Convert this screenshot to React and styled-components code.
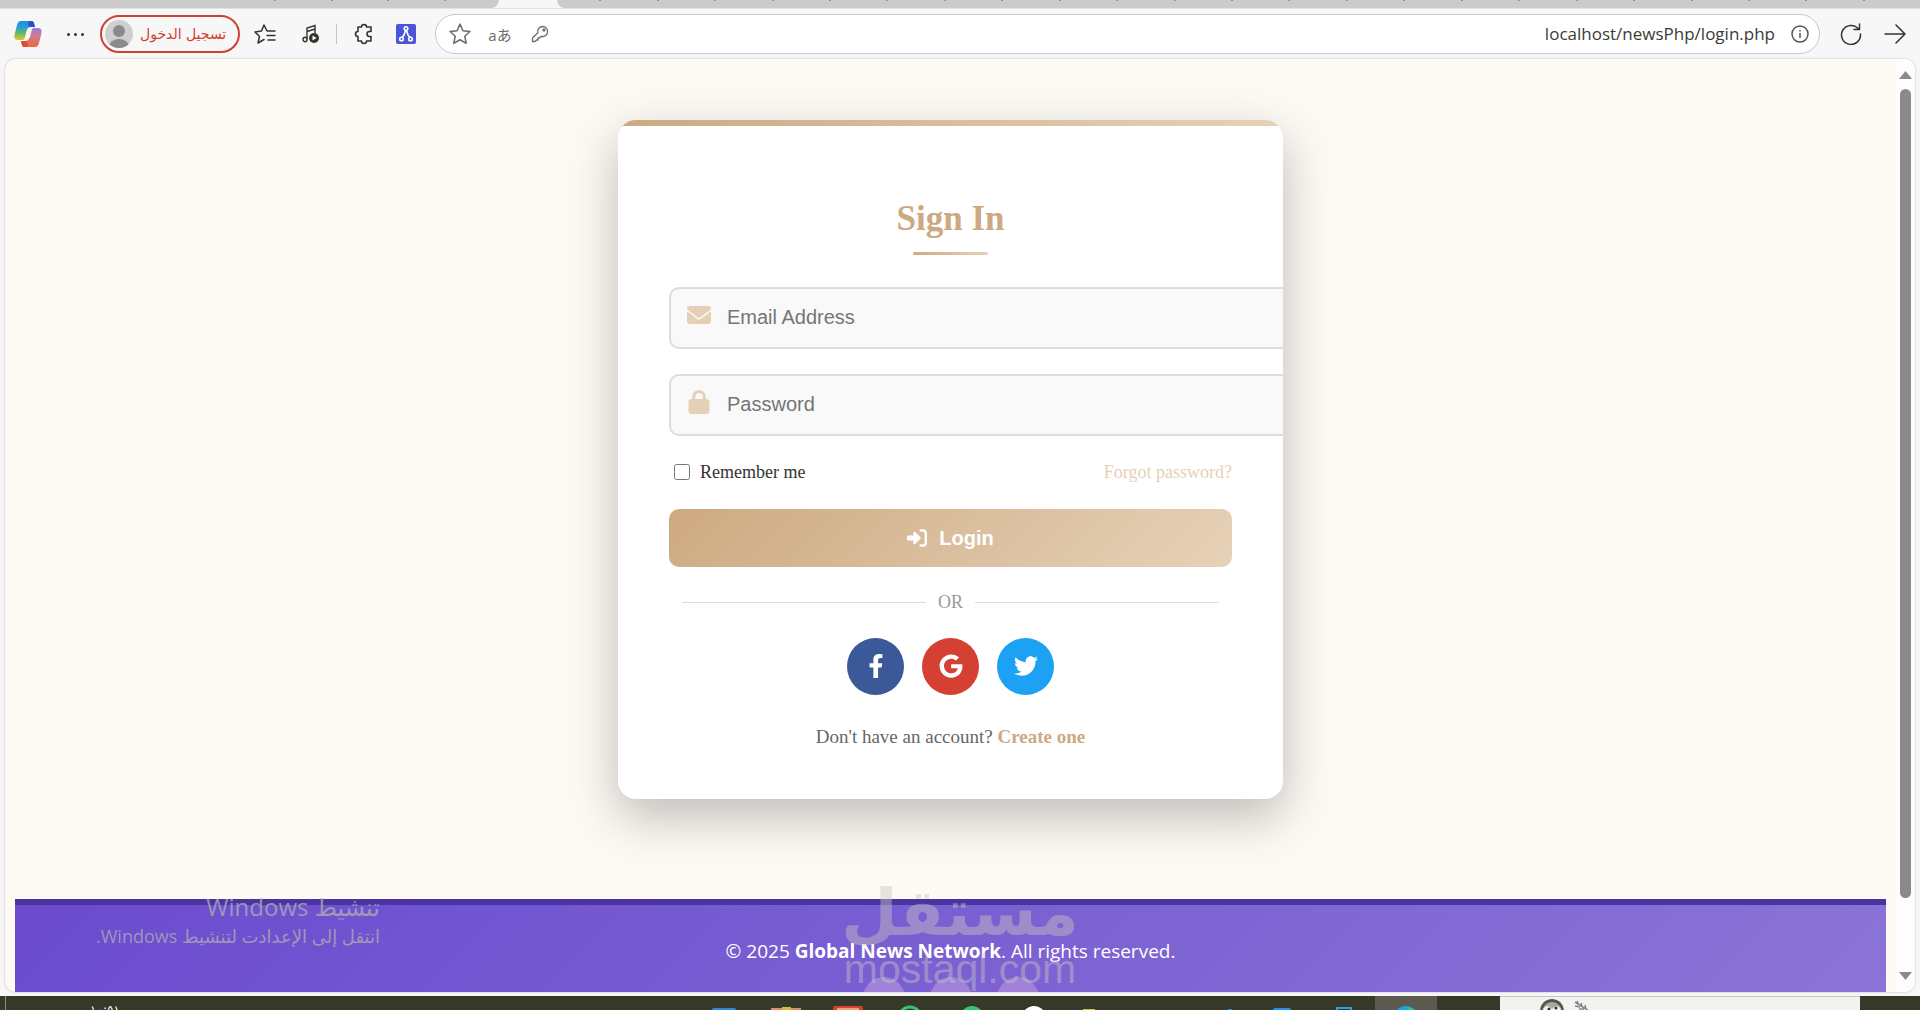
import React from "react";
import styled, { createGlobalStyle, css } from "styled-components";
import { FaFacebookF, FaGoogle, FaTwitter } from "react-icons/fa";
import { FaEnvelope, FaLock, FaRightToBracket } from "react-icons/fa6";

const TAB_TICKS_LEFT = 4;
const TAB_TICKS_RIGHT = 23;

const SOCIALS = [
  { name: "Facebook", color: "#3b5998", Icon: FaFacebookF },
  { name: "Google", color: "#d44132", Icon: FaGoogle },
  { name: "Twitter", color: "#1da1f2", Icon: FaTwitter },
];

const TASKS = [
  { name: "Mail", art: <rect x="19" y="12" width="24" height="8" rx="2" fill="#2f86d0" /> },
  {
    name: "Files",
    art: (
      <>
        <rect x="16" y="12" width="30" height="8" fill="#e08a70" />
        <rect x="27" y="11" width="9" height="8" fill="#d9b544" />
      </>
    ),
  },
  {
    name: "Presentation",
    art: (
      <>
        <rect x="16" y="10" width="30" height="8" rx="2" fill="#d8402f" />
        <rect x="20" y="12" width="22" height="4" fill="#e5a868" />
      </>
    ),
  },
  { name: "Messages", art: <circle cx="31" cy="22" r="11" fill="none" stroke="#35c46c" strokeWidth="3" /> },
  { name: "Music", art: <circle cx="31" cy="22" r="12" fill="#35c46c" /> },
  { name: "Chat", art: <circle cx="31" cy="22" r="12" fill="#ffffff" /> },
  { name: "Folder", art: <rect x="18" y="13" width="12" height="4" fill="#e0b83c" /> },
  { name: "Notes", art: null },
  { name: "Editor", art: <rect x="39" y="13" width="4" height="3" fill="#1f8fe8" /> },
  { name: "Store", art: <rect x="22" y="12" width="18" height="6" rx="2" fill="#1f8fe8" /> },
  {
    name: "Phone",
    art: <rect x="24" y="12" width="14" height="10" fill="none" stroke="#1da1f2" strokeWidth="2" />,
  },
  {
    name: "Browser",
    active: true,
    art: (
      <>
        <circle cx="31" cy="22" r="12" fill="#1da1f2" />
        <path d="M32 11 Q40 12 42 18 L34 18Z" fill="#35c46c" />
      </>
    ),
  },
];

const CopilotIcon = () => (
  <svg width="28" height="28" viewBox="0 0 28 28" aria-hidden="true">
    <defs>
      <linearGradient id="copilotLeft" x1="0" y1="0" x2="0" y2="1">
        <stop offset="0" stopColor="#1a8df0" />
        <stop offset="0.35" stopColor="#2a9fd8" />
        <stop offset="0.6" stopColor="#55b86a" />
        <stop offset="1" stopColor="#e8c23a" />
      </linearGradient>
      <linearGradient id="copilotRight" x1="0" y1="0" x2="0" y2="1">
        <stop offset="0" stopColor="#9a78e0" />
        <stop offset="0.45" stopColor="#d77a86" />
        <stop offset="1" stopColor="#e66a3c" />
      </linearGradient>
    </defs>
    <path d="M7 1h10c3 0 3 2 4 6h-4c-3 0-4 2-5 6l-1 4c-1 3-1 3-4 3H4c-4 0-4-3-3-7l2-8c1-3 2-4 4-4Z" fill="url(#copilotLeft)" />
    <path d="M15 1h2c3 0 3 2 4 6h-5c-2 0-2-4-1-6Z" fill="#2a50c0" />
    <path d="M21 27H11c-3 0-3-2-4-6h4c3 0 4-2 5-6l1-4c1-3 2-3 4-3h3c4 0 4 3 3 7l-2 8c-1 3-2 4-4 4Z" fill="url(#copilotRight)" />
    <path d="M13 27h-2c-3 0-3-2-4-6h5c2 0 2 4 1 6Z" fill="#e04a30" />
    <path d="M16 9h2l-2 8c-1 2-2 3-4 3h-1c1-1 1-2 2-5 0-3 1-6 3-6Z" fill="#fbf6f2" />
  </svg>
);

const AvatarIcon = () => (
  <svg width="28" height="28" viewBox="0 0 28 28" aria-hidden="true">
    <defs>
      <clipPath id="avatarClip">
        <circle cx="14" cy="14" r="14" />
      </clipPath>
    </defs>
    <g clipPath="url(#avatarClip)">
      <rect width="28" height="28" fill="#cfcfcf" />
      <circle cx="14" cy="11" r="6" fill="#8a8a8a" />
      <ellipse cx="14" cy="27" rx="10" ry="8" fill="#8a8a8a" />
    </g>
  </svg>
);

const FavoritesIcon = () => (
  <svg width="22" height="20" viewBox="0 0 22 20" fill="none" stroke="#33352c" strokeWidth="1.5" strokeLinecap="round" strokeLinejoin="round" aria-hidden="true">
    <path d="M13 7 10 1 7.5 7 1 8l4.500 4.500L4 19l6-3.500M13 7h8M13 11.500h8M14 16h7" />
  </svg>
);

const MusicIcon = () => (
  <svg width="18" height="20" viewBox="0 0 18 20" fill="none" stroke="#33352c" strokeWidth="1.400" aria-hidden="true">
    <ellipse cx="3" cy="15.500" rx="2" ry="2.200" />
    <path d="M5 15.500V4l8-2.500V9M5 7.500 13 5" />
    <circle cx="12" cy="14" r="5" fill="#33352c" stroke="none" />
    <path d="m10.500 11.500 4 2.500-4 2.500Z" fill="#fff" stroke="none" />
  </svg>
);

const PuzzleIcon = () => (
  <svg width="20" height="22" viewBox="0 0 20 22" fill="none" stroke="#33352c" strokeWidth="1.600" strokeLinejoin="round" aria-hidden="true">
    <path d="M5 4h3.500a2.500 2.500 0 0 1 5 0H18v4.500h-1.500a2.500 2.500 0 0 0 0 5H18V18h-4.500a2.500 2.500 0 0 1-5 0H5v-4.500a2.500 2.500 0 0 1 0-5Z" />
  </svg>
);

const NodesIcon = () => (
  <svg width="20" height="20" viewBox="0 0 20 20" aria-hidden="true">
    <rect width="20" height="20" rx="2" fill="#4a55d8" />
    <g fill="none" stroke="#fff" strokeWidth="1.600">
      <circle cx="10" cy="4.500" r="1.800" />
      <path d="M9.500 6.500 8 11l-2 2.500M10.500 6.500 12 11l2 2.500" />
      <circle cx="5.500" cy="15" r="1.800" />
      <circle cx="14.500" cy="15" r="1.800" />
    </g>
  </svg>
);

const StarIcon = () => (
  <svg width="22" height="22" viewBox="0 0 20 20" fill="none" stroke="#6b6b6b" strokeWidth="1.400" strokeLinejoin="round" aria-hidden="true">
    <path d="m10 1 2.700 6 6.300.700-4.700 4.300 1.400 6.500L10 15.200 4.300 18.500 5.700 12 1 7.700 7.300 7Z" />
  </svg>
);

const KeyIcon = () => (
  <svg width="18" height="18" viewBox="0 0 18 18" fill="none" stroke="#6b6b6b" strokeWidth="1.300" strokeLinejoin="round" aria-hidden="true">
    <path d="M11.500 1.500a5 5 0 1 1-1.300 9.800L8.500 13H7v2H5.500L4 16.500H1.500V13l5.300-5.300a5 5 0 0 1 4.700-6.200Z" />
    <circle cx="13" cy="5" r="1" />
  </svg>
);

const InfoIcon = () => (
  <svg width="18" height="18" viewBox="0 0 18 18" fill="none" stroke="#555" strokeWidth="1.500" aria-hidden="true">
    <circle cx="9" cy="9" r="8" />
    <path d="M9 8v5M9 5v1.500" />
  </svg>
);

const RefreshIcon = () => (
  <svg width="22" height="22" viewBox="0 0 22 22" fill="none" stroke="#33352c" strokeWidth="1.500" strokeLinecap="round" strokeLinejoin="round" aria-hidden="true">
    <path d="M18.500 6A9.500 9.500 0 1 0 20.500 11M19.500 1v5.500h-5.500" />
  </svg>
);

const ForwardIcon = () => (
  <svg width="22" height="20" viewBox="0 0 22 20" fill="none" stroke="#33352c" strokeWidth="1.500" strokeLinecap="round" strokeLinejoin="round" aria-hidden="true">
    <path d="M1 10h20M12 1l9 9-9 9" />
  </svg>
);

const PenguinArt = () => (
  <svg width="60" height="13" viewBox="0 0 60 13" aria-hidden="true">
    <ellipse cx="12" cy="13" rx="12" ry="12" fill="#55534e" />
    <ellipse cx="12" cy="15" rx="10" ry="11" fill="#a9a69f" />
    <path d="M3 11q4-6 9 0q5-6 9 0l-3 5H6Z" fill="#f7f3ea" />
    <circle cx="9" cy="11" r="1.500" fill="#3b2d22" />
    <circle cx="16" cy="10" r="1.500" fill="#3b2d22" />
    <path d="m11 12 3 0-1 3Z" fill="#e08a50" />
    <path d="m35 4 14 9M37 3l2 4M41 5l1 4M35 8l5 1M39 11l5 0M45 7l1 4" stroke="#85858c" strokeWidth="1.500" fill="none" />
  </svg>
);

const App = () => {
  return (
    <Desktop>
      <GlobalStyle />
      <TabStrip>
        <TabGroup $side="left">
          {Array.from({ length: TAB_TICKS_LEFT }, (_, i) => (
            <TabTick key={i} />
          ))}
        </TabGroup>
        <TabGroup $side="right">
          {Array.from({ length: TAB_TICKS_RIGHT }, (_, i) => (
            <TabTick key={i} />
          ))}
        </TabGroup>
      </TabStrip>

      <Toolbar>
        <ToolButton aria-label="Copilot" $width={46}>
          <CopilotIcon />
        </ToolButton>
        <ToolButton aria-label="More" $width={49}>
          <Dots>
            <i />
            <i />
            <i />
          </Dots>
        </ToolButton>
        <ProfileButton>
          <AvatarIcon />
          <span lang="ar">تسجيل الدخول</span>
        </ProfileButton>
        <ToolButton aria-label="Favorites" $width={50}>
          <FavoritesIcon />
        </ToolButton>
        <ToolButton aria-label="Media" $width={42}>
          <MusicIcon />
        </ToolButton>
        <Separator />
        <ToolButton aria-label="Extensions" $width={44}>
          <PuzzleIcon />
        </ToolButton>
        <ToolButton aria-label="Nodes" $width={42}>
          <NodesIcon />
        </ToolButton>
        <AddressBar>
          <ToolButton aria-label="Bookmark" $width={40}>
            <StarIcon />
          </ToolButton>
          <TranslateButton aria-label="Translate">aあ</TranslateButton>
          <ToolButton aria-label="Passwords" $width={40}>
            <KeyIcon />
          </ToolButton>
          <AddressInput aria-label="Address" defaultValue="localhost/newsPhp/login.php" />
          <ToolButton aria-label="Site information" $width={30}>
            <InfoIcon />
          </ToolButton>
        </AddressBar>
        <ToolButton aria-label="Reload" $width={46}>
          <RefreshIcon />
        </ToolButton>
        <ToolButton aria-label="Forward" $width={42}>
          <ForwardIcon />
        </ToolButton>
      </Toolbar>

      <Viewport>
        <Page>
          <Main>
            <Card onSubmit={(e) => e.preventDefault()}>
              <CardBody>
                <Title>Sign In</Title>
                <Field>
                  <FieldIcon>
                    <FaEnvelope />
                  </FieldIcon>
                  <Input type="email" placeholder="Email Address" aria-label="Email Address" />
                </Field>
                <Field>
                  <FieldIcon>
                    <FaLock />
                  </FieldIcon>
                  <Input type="password" placeholder="Password" aria-label="Password" />
                </Field>
                <Options>
                  <Remember htmlFor="remember">
                    <Checkbox type="checkbox" id="remember" />
                    Remember me
                  </Remember>
                  <ForgotLink href="#forgot">Forgot password?</ForgotLink>
                </Options>
                <LoginButton type="submit">
                  <FaRightToBracket />
                  Login
                </LoginButton>
                <Divider>OR</Divider>
                <Socials>
                  {SOCIALS.map(({ name, color, Icon }) => (
                    <SocialLink key={name} href={`#${name}`} aria-label={name} $color={color}>
                      <Icon />
                    </SocialLink>
                  ))}
                </Socials>
                <Signup>
                  Don't have an account? <SignupLink href="#register">Create one</SignupLink>
                </Signup>
              </CardBody>
            </Card>
          </Main>
          <Footer>
            <Copyright>
              © 2025 <strong>Global News Network</strong>. All rights reserved.
            </Copyright>
            <FooterBubbles>
              <i />
              <i />
              <i />
            </FooterBubbles>
          </Footer>
        </Page>
        <Scrollbar>
          <ScrollArrow $up viewBox="0 0 13 8">
            <path d="M6.500 0 13 8H0Z" />
          </ScrollArrow>
          <ScrollThumb />
          <ScrollArrow viewBox="0 0 13 8">
            <path d="M0 0h13L6.500 8Z" />
          </ScrollArrow>
        </Scrollbar>
      </Viewport>

      <Watermark>
        <WatermarkArabic lang="ar">مستقل</WatermarkArabic>
        <WatermarkLatin>mostaql.com</WatermarkLatin>
      </Watermark>

      <Activation dir="rtl" lang="ar">
        <ActivationTitle>تنشيط Windows</ActivationTitle>
        <ActivationText>انتقل إلى الإعدادت لتنشيط Windows.</ActivationText>
      </Activation>

      <Taskbar>
        <ClockArea>
          <Clock>١٠:٥١</Clock>
        </ClockArea>
        {TASKS.map(({ name, art, active }) => (
          <TaskButton key={name} aria-label={name} $active={active}>
            <svg width="62" height="14" viewBox="0 0 62 14" aria-hidden="true">
              {art}
            </svg>
          </TaskButton>
        ))}
        <SearchBox>
          <PenguinArt />
        </SearchBox>
      </Taskbar>
    </Desktop>
  );
};

const GlobalStyle = createGlobalStyle`
  * {
    box-sizing: border-box;
  }

  body {
    margin: 0;
    background: #f7f7f7;
    font-family: "Liberation Serif", "Times New Roman", serif;
  }
`;

const Desktop = styled.div`
  position: relative;
  display: flex;
  flex-direction: column;
  height: 100vh;
  overflow: hidden;
  background: #f7f7f7;
`;

const TabStrip = styled.div`
  display: flex;
  gap: 58px;
  height: 8px;
  flex-shrink: 0;
`;

const TabGroup = styled.div`
  display: flex;
  justify-content: space-between;
  background: #cbcbcb;

  ${({ $side }) =>
    $side === "left"
      ? css`
          width: 26%;
          padding: 0 53px 0 274px;
          border-bottom-right-radius: 8px;
        `
      : css`
          flex: 1;
          padding: 0 55px 0 42px;
          border-bottom-left-radius: 8px;
        `}
`;

const TabTick = styled.span`
  width: 2px;
  height: 1px;
  background: #8f8bb5;
`;

const Toolbar = styled.header`
  display: flex;
  align-items: center;
  height: 51px;
  flex-shrink: 0;
  padding: 0 4px 0 5px;
  border-top: 1px solid #e2e2e2;
`;

const Button = styled.button`
  padding: 0;
  border: none;
  background: none;
  cursor: pointer;
`;

const ToolButton = styled(Button)`
  display: flex;
  align-items: center;
  justify-content: center;
  flex-shrink: 0;
  width: ${({ $width }) => $width}px;
  height: 30px;
`;

const Dots = styled.span`
  display: flex;
  gap: 4px;

  i {
    width: 3px;
    height: 3px;
    border-radius: 50%;
    background: #33352c;
  }
`;

const ProfileButton = styled(Button)`
  display: flex;
  align-items: center;
  gap: 7px;
  width: 140px;
  height: 38px;
  padding: 0 3px;
  border: 2px solid #d0402f;
  border-radius: 19px;
  color: #d0402f;
  font-family: "DejaVu Sans", sans-serif;
  font-size: 14px;
  white-space: nowrap;
`;

const Separator = styled.span`
  width: 1px;
  height: 20px;
  margin: 0 4px;
  background: #c4c4c4;
`;

const AddressBar = styled.div`
  display: flex;
  align-items: center;
  flex: 1;
  height: 40px;
  margin: 0 8px;
  padding: 0 4px;
  border: 1px solid #c9c9c9;
  border-radius: 20px;
  background: #ffffff;
`;

const TranslateButton = styled(Button)`
  width: 40px;
  color: #6b6b6b;
  font-family: "Open Sans", "Noto Sans CJK JP", sans-serif;
  font-size: 15px;
`;

const AddressInput = styled.input`
  flex: 1;
  min-width: 0;
  padding: 0 10px 2px;
  border: none;
  outline: none;
  background: transparent;
  color: #3a3c36;
  font-family: "Open Sans", sans-serif;
  font-size: 17px;
  text-align: right;
`;

const Viewport = styled.div`
  display: flex;
  flex: 1;
  min-height: 0;
  margin: 0 5px 4px;
  overflow: hidden;
  border-radius: 10px;
  background: #fdfaf5;
  box-shadow: 0 0 2px rgba(0, 0, 0, 0.3);
`;

const Page = styled.div`
  display: flex;
  flex-direction: column;
  flex: 1;
  min-width: 0;
  padding: 0 10px;
  overflow: hidden;
`;

const Main = styled.main`
  display: flex;
  justify-content: center;
  padding: 61px 0 100px;
`;

const Card = styled.form`
  width: 100%;
  max-width: 665px;
  overflow: hidden;
  border-radius: 18px;
  background: #ffffff;
  box-shadow: 0 18px 50px rgba(0, 0, 0, 0.25);

  &::before {
    content: "";
    display: block;
    height: 6px;
    background: linear-gradient(90deg, #cda981, #e6d2b8);
  }
`;

const CardBody = styled.div`
  display: flex;
  flex-direction: column;
  padding: 73px 51px 51px;
`;

const Title = styled.h1`
  margin: 0 0 32px;
  color: #cda981;
  font-size: 35px;
  line-height: 40px;
  text-align: center;

  &::after {
    content: "";
    display: block;
    width: 75px;
    height: 3px;
    margin: 13px auto 0;
    border-radius: 2px;
    background: linear-gradient(90deg, #cda981, #e6d2b8);
  }
`;

const Field = styled.div`
  position: relative;
  margin-bottom: 25px;
`;

const FieldIcon = styled.span`
  position: absolute;
  top: 16px;
  left: 18px;
  display: flex;
  color: #e6d0b5;
  font-size: 24px;
`;

/* content-box keeps the field running under the right edge of the card */
const Input = styled.input`
  display: block;
  box-sizing: content-box;
  width: 100%;
  height: 56px;
  padding: 0 20px 2px 56px;
  border: 2px solid #dddddd;
  border-radius: 10px;
  outline: none;
  background: #f9f9f9;
  color: #333333;
  font-family: "Liberation Sans", Arial, sans-serif;
  font-size: 20px;

  &::placeholder {
    color: #757575;
  }
`;

const Options = styled.div`
  display: flex;
  align-items: center;
  justify-content: space-between;
  margin-bottom: 26px;
  font-size: 18px;
  line-height: 22px;
`;

const Remember = styled.label`
  display: flex;
  align-items: center;
  gap: 10px;
  color: #333333;
`;

const Checkbox = styled.input`
  width: 16px;
  height: 16px;
  margin: 0 0 0 5px;
`;

const ForgotLink = styled.a`
  color: #e6d0b5;
  text-decoration: none;
`;

const LoginButton = styled(Button)`
  display: flex;
  align-items: center;
  justify-content: center;
  gap: 12px;
  height: 58px;
  border-radius: 10px;
  background: linear-gradient(135deg, #cda981, #e6d2b8);
  color: #ffffff;
  font-family: "Liberation Sans", Arial, sans-serif;
  font-size: 20px;
  font-weight: 700;
`;

const Divider = styled.div`
  display: flex;
  align-items: center;
  gap: 12px;
  margin: 24px 13px 25px;
  color: #999999;
  font-size: 18px;
  line-height: 22px;

  &::before,
  &::after {
    content: "";
    flex: 1;
    height: 1px;
    background: #dddddd;
  }
`;

const Socials = styled.div`
  display: flex;
  justify-content: center;
  gap: 18px;
  margin-bottom: 31px;
`;

const SocialLink = styled.a`
  display: flex;
  align-items: center;
  justify-content: center;
  width: 57px;
  height: 57px;
  padding-bottom: 2px;
  border-radius: 50%;
  background: ${({ $color }) => $color};
  color: #ffffff;
  font-size: 24px;
`;

const Signup = styled.p`
  margin: 0;
  color: #666666;
  font-size: 19px;
  line-height: 22px;
  text-align: center;
`;

const SignupLink = styled.a`
  color: #cda981;
  font-weight: 700;
  text-decoration: none;
`;

const Footer = styled.footer`
  flex: 1;
  overflow: hidden;
  padding-top: 32px;
  border-top: 6px solid #4a35a0;
  background: linear-gradient(135deg, #6a4bcf, #8b74d6);
  color: #ffffff;
  font-family: "Open Sans", sans-serif;
`;

const Copyright = styled.p`
  margin: 0;
  font-size: 19px;
  line-height: 28px;
  text-align: center;
`;

const FooterBubbles = styled.div`
  display: flex;
  justify-content: center;
  gap: 25px;
  padding-top: 12px;

  i {
    flex-shrink: 0;
    width: 42px;
    height: 42px;
    border-radius: 50%;
    background: #a082d9;
  }
`;

const Watermark = styled.div`
  position: absolute;
  right: 0;
  bottom: 18px;
  left: 0;
  display: flex;
  flex-direction: column;
  align-items: center;
  color: #c8c6c1;
  opacity: 0.44;
  pointer-events: none;
`;

const WatermarkArabic = styled.span`
  font-family: "DejaVu Sans", sans-serif;
  font-size: 65px;
  font-weight: 700;
  line-height: 66px;
`;

const WatermarkLatin = styled.span`
  font-family: "Liberation Sans", Arial, sans-serif;
  font-size: 41px;
  line-height: 46px;
`;

const Scrollbar = styled.div`
  display: flex;
  flex-direction: column;
  align-items: center;
  gap: 10px;
  width: 19px;
  padding: 12px 0;
  background: #fdfdfd;
`;

const ScrollArrow = styled.svg`
  width: 13px;
  height: 8px;
  flex-shrink: 0;
  margin-top: ${({ $up }) => ($up ? "0" : "auto")};
  fill: #8a8a8a;
`;

const ScrollThumb = styled.div`
  width: 11px;
  height: 89%;
  border-radius: 6px;
  background: #8a8a8a;
`;

const Activation = styled.div`
  position: absolute;
  bottom: 60px;
  left: 96px;
  color: rgba(176, 176, 176, 0.75);
  font-family: "Open Sans", "DejaVu Sans", sans-serif;
  pointer-events: none;
`;

const ActivationTitle = styled.p`
  margin: 0;
  font-size: 24px;
  line-height: 30px;
`;

const ActivationText = styled.p`
  margin: 0;
  font-size: 18px;
  line-height: 28px;
`;

const Taskbar = styled.nav`
  display: flex;
  height: 14px;
  flex-shrink: 0;
  padding-right: 60px;
  overflow: hidden;
  background: #363828;
`;

const ClockArea = styled.div`
  flex: 1;
  margin-left: 5px;
  padding: 4px 0 0 84px;
  border-left: 1px solid #8a8a80;
`;

const Clock = styled.time`
  color: #ffffff;
  font-family: "DejaVu Sans", sans-serif;
  font-size: 12px;
  line-height: 16px;
`;

const TaskButton = styled(Button)`
  display: flex;
  width: 62px;
  background: ${({ $active }) => ($active ? "#5c594e" : "transparent")};
`;

const SearchBox = styled.div`
  width: 360px;
  height: 14px;
  margin-left: 63px;
  padding-left: 40px;
  border-top: 1px solid #c4c4c0;
  background: #f3f2ee;
`;

export default App;
